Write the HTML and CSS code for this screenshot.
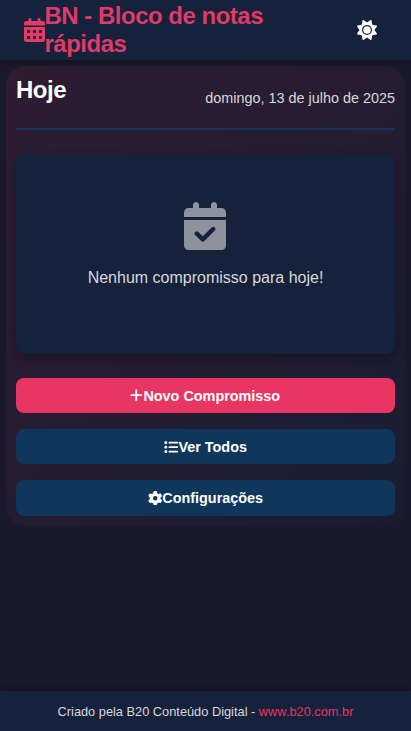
FILE: index.html
```html
<!DOCTYPE html>
<html lang="pt-BR">
<head>
    <meta charset="UTF-8">
    <meta name="viewport" content="width=device-width, initial-scale=1.0">
    <title>BN - Bloco de notas rápidas</title>
    <link rel="stylesheet" href="styles.css">
</head>
<body>
    <header class="app-header">
        <div class="logo">
            <svg class="icon" viewBox="0 0 448 512"><path d="M128 0c17.7 0 32 14.3 32 32V64H288V32c0-17.7 14.3-32 32-32s32 14.3 32 32V64h48c26.5 0 48 21.5 48 48v48H0V112C0 85.5 21.5 64 48 64H96V32c0-17.7 14.3-32 32-32zM0 192H448V464c0 26.5-21.5 48-48 48H48c-26.5 0-48-21.5-48-48V192zm64 80v32c0 8.8 7.2 16 16 16h32c8.8 0 16-7.2 16-16V272c0-8.8-7.2-16-16-16H80c-8.8 0-16 7.2-16 16zm128 0v32c0 8.8 7.2 16 16 16h32c8.8 0 16-7.2 16-16V272c0-8.8-7.2-16-16-16H208c-8.8 0-16 7.2-16 16zm144-16c-8.8 0-16 7.2-16 16v32c0 8.8 7.2 16 16 16h32c8.8 0 16-7.2 16-16V272c0-8.8-7.2-16-16-16H336zM64 400v32c0 8.8 7.2 16 16 16h32c8.8 0 16-7.2 16-16V400c0-8.8-7.2-16-16-16H80c-8.8 0-16 7.2-16 16zm144-16c-8.8 0-16 7.2-16 16v32c0 8.8 7.2 16 16 16h32c8.8 0 16-7.2 16-16V400c0-8.8-7.2-16-16-16H208zm112 16v32c0 8.8 7.2 16 16 16h32c8.8 0 16-7.2 16-16V400c0-8.8-7.2-16-16-16H336c-8.8 0-16 7.2-16 16z"/></svg>
            <h1>BN - Bloco de notas rápidas</h1>
        </div>
        <button class="theme-toggle" aria-label="Alternar tema">
            <svg class="icon" viewBox="0 0 512 512"><path d="M361.5 1.2c5 2.1 8.6 6.6 9.6 11.9L391 121l107.9 19.8c5.3 1 9.8 4.6 11.9 9.6s1.5 10.7-1.6 15.2L446.9 256l62.3 90.3c3.1 4.5 3.7 10.2 1.6 15.2s-6.6 8.6-11.9 9.6L391 391 371.1 498.9c-1 5.3-4.6 9.8-9.6 11.9s-10.7 1.5-15.2-1.6L256 446.9l-90.3 62.3c-4.5 3.1-10.2 3.7-15.2 1.6s-8.6-6.6-9.6-11.9L121 391 13.1 371.1c-5.3-1-9.8-4.6-11.9-9.6s-1.5-10.7 1.6-15.2L65.1 256 2.8 165.7c-3.1-4.5-3.7-10.2-1.6-15.2s6.6-8.6 11.9-9.6L121 121 140.9 13.1c1-5.3 4.6-9.8 9.6-11.9s10.7-1.5 15.2 1.6L256 65.1 346.3 2.8c4.5-3.1 10.2-3.7 15.2-1.6zM160 256a96 96 0 1 1 192 0 96 96 0 1 1 -192 0zm224 0a128 128 0 1 0 -256 0 128 128 0 1 0 256 0z"/></svg>
        </button>
    </header>

    <main class="today">
        <div class="today-header">
            <h2>Hoje</h2>
            <p class="date">domingo, 13 de julho de 2025</p>
        </div>

        <div class="appointments">
            <svg class="icon" viewBox="0 0 448 512"><path d="M128 0c17.7 0 32 14.3 32 32V64H288V32c0-17.7 14.3-32 32-32s32 14.3 32 32V64h48c26.5 0 48 21.5 48 48v48H0V112C0 85.5 21.5 64 48 64H96V32c0-17.7 14.3-32 32-32zM0 192H448V464c0 26.5-21.5 48-48 48H48c-26.5 0-48-21.5-48-48V192zM329 305c9.4-9.4 9.4-24.6 0-33.9s-24.6-9.4-33.9 0l-95 95-47-47c-9.4-9.4-24.6-9.4-33.9 0s-9.4 24.6 0 33.9l64 64c9.4 9.4 24.6 9.4 33.9 0L329 305z"/></svg>
            <p>Nenhum compromisso para hoje!</p>
        </div>

        <div class="actions">
            <button class="btn btn-primary">
                <svg class="icon" viewBox="0 0 448 512"><path d="M256 80c0-17.7-14.3-32-32-32s-32 14.3-32 32V224H48c-17.7 0-32 14.3-32 32s14.3 32 32 32H192V432c0 17.7 14.3 32 32 32s32-14.3 32-32V288H400c17.7 0 32-14.3 32-32s-14.3-32-32-32H256V80z"/></svg>
                Novo Compromisso
            </button>
            <button class="btn">
                <svg class="icon" viewBox="0 0 512 512"><path d="M40 48C26.7 48 16 58.7 16 72v48c0 13.3 10.7 24 24 24H88c13.3 0 24-10.7 24-24V72c0-13.3-10.7-24-24-24H40zM192 64c-17.7 0-32 14.3-32 32s14.3 32 32 32H480c17.7 0 32-14.3 32-32s-14.3-32-32-32H192zm0 160c-17.7 0-32 14.3-32 32s14.3 32 32 32H480c17.7 0 32-14.3 32-32s-14.3-32-32-32H192zm0 160c-17.7 0-32 14.3-32 32s14.3 32 32 32H480c17.7 0 32-14.3 32-32s-14.3-32-32-32H192zM16 232v48c0 13.3 10.7 24 24 24H88c13.3 0 24-10.7 24-24V232c0-13.3-10.7-24-24-24H40c-13.3 0-24 10.7-24 24zM40 368c-13.3 0-24 10.7-24 24v48c0 13.3 10.7 24 24 24H88c13.3 0 24-10.7 24-24V392c0-13.3-10.7-24-24-24H40z"/></svg>
                Ver Todos
            </button>
            <button class="btn">
                <svg class="icon" viewBox="0 0 512 512"><path d="M495.9 166.6c3.2 8.7 .5 18.4-6.4 24.6l-43.3 39.4c1.1 8.3 1.7 16.8 1.7 25.4s-.6 17.1-1.7 25.4l43.3 39.4c6.9 6.2 9.6 15.9 6.4 24.6c-4.4 11.9-9.7 23.3-15.8 34.3l-4.7 8.1c-6.6 11-14 21.4-22.1 31.2c-5.9 7.2-15.7 9.6-24.5 6.8l-55.7-17.7c-13.4 10.3-28.2 18.9-44 25.4l-12.5 57.1c-2 9.1-9 16.3-18.2 17.8c-13.8 2.3-28 3.5-42.5 3.5s-28.7-1.2-42.5-3.5c-9.2-1.5-16.2-8.7-18.2-17.8l-12.5-57.1c-15.8-6.5-30.6-15.1-44-25.4L83.1 425.9c-8.8 2.8-18.6 .3-24.5-6.8c-8.1-9.8-15.5-20.2-22.1-31.2l-4.7-8.1c-6.1-11-11.4-22.4-15.8-34.3c-3.2-8.7-.5-18.4 6.4-24.6l43.3-39.4C64.6 273.1 64 264.6 64 256s.6-17.1 1.7-25.4L22.4 191.2c-6.9-6.2-9.6-15.9-6.4-24.6c4.4-11.9 9.7-23.3 15.8-34.3l4.7-8.1c6.6-11 14-21.4 22.1-31.2c5.9-7.2 15.7-9.6 24.5-6.8l55.7 17.7c13.4-10.3 28.2-18.9 44-25.4l12.5-57.1c2-9.1 9-16.3 18.2-17.8C227.3 1.2 241.5 0 256 0s28.7 1.2 42.5 3.5c9.2 1.5 16.2 8.7 18.2 17.8l12.5 57.1c15.8 6.5 30.6 15.1 44 25.4l55.7-17.7c8.8-2.8 18.6-.3 24.5 6.8c8.1 9.8 15.5 20.2 22.1 31.2l4.7 8.1c6.1 11 11.4 22.4 15.8 34.3zM256 336a80 80 0 1 0 0-160 80 80 0 1 0 0 160z"/></svg>
                Configurações
            </button>
        </div>
    </main>

    <footer class="app-footer">
        <p>Criado pela B20 Conteúdo Digital - <a href="#">www.b20.com.br</a></p>
    </footer>
</body>
</html>
```

FILE: styles.css
```css
:root {
    --primary: #e83563;
    --secondary: #10365c;
    --background: #1a1a2c;
    --surface: #16213b;
    --text: #ffffff;
    --text-soft: #d8d8dc;
}
* {
    margin: 0;
    padding: 0;
    box-sizing: border-box;
}
body {
    font-family: "Liberation Sans", Arial, sans-serif;
    background-color: var(--background);
    color: var(--text);
    min-height: 100vh;
    display: flex;
    flex-direction: column;
}
button {
    font-family: inherit;
    border: none;
    cursor: pointer;
}
.icon {
    height: 1em;
    fill: currentColor;
    flex-shrink: 0;
}

/* Header */
.app-header {
    display: flex;
    justify-content: space-between;
    align-items: center;
    height: 60px;
    padding: 0 24px;
    background-color: var(--surface);
    box-shadow: 0 2px 10px rgba(0, 0, 0, 0.3);
}
.logo {
    display: flex;
    align-items: center;
    width: 270px;
    font-size: 24px;
    color: #de3b67;
}
.logo .icon {
    margin-right: -0.5px;
}
.logo h1 {
    font-size: 24px;
    line-height: 28px;
    letter-spacing: -0.5px;
}
.theme-toggle {
    display: flex;
    padding: 10px;
    font-size: 20px;
    background: none;
    color: var(--text);
}

/* Today */
.today {
    margin: 6px;
    padding: 10px;
    border-radius: 20px;
    background: linear-gradient(135deg, rgba(232, 53, 99, 0.1), rgba(16, 54, 92, 0.1));
}
.today-header {
    display: flex;
    justify-content: space-between;
    align-items: center;
    padding-bottom: 8px;
    margin-bottom: 24px;
    border-bottom: 2px solid var(--secondary);
}
.today-header h2 {
    font-size: 24px;
    line-height: 28px;
    letter-spacing: -0.5px;
    margin-bottom: 16px;
}
.date {
    font-size: 14.4px;
    color: var(--text-soft);
}
.appointments {
    display: flex;
    flex-direction: column;
    align-items: center;
    height: 200px;
    padding: 48px 16px;
    margin-bottom: 24px;
    border-radius: 8px;
    background-color: var(--surface);
    box-shadow: 0 4px 12px rgba(0, 0, 0, 0.3);
    color: var(--text-soft);
}
.appointments .icon {
    font-size: 48px;
    margin: 0 1px 16px 0;
    opacity: 0.62;
}
.appointments p {
    line-height: 24px;
}
.actions {
    display: flex;
    flex-direction: column;
    gap: 16px;
}
.btn {
    display: flex;
    justify-content: center;
    align-items: center;
    padding: 9.6px;
    border-radius: 8px;
    font-size: 14.4px;
    font-weight: bold;
    line-height: 16px;
    background-color: var(--secondary);
    color: var(--text);
}
.btn .icon {
    margin: 0 0.4px 0 -0.4px;
}
.btn-primary {
    background-color: var(--primary);
}

/* Footer */
.app-footer {
    display: flex;
    justify-content: center;
    align-items: center;
    height: 40px;
    margin-top: auto;
    font-size: 12.8px;
    background-color: var(--surface);
    box-shadow: 0 -2px 10px rgba(0, 0, 0, 0.3);
    color: var(--text-soft);
}
.app-footer a {
    color: var(--primary);
    text-decoration: none;
}
```
